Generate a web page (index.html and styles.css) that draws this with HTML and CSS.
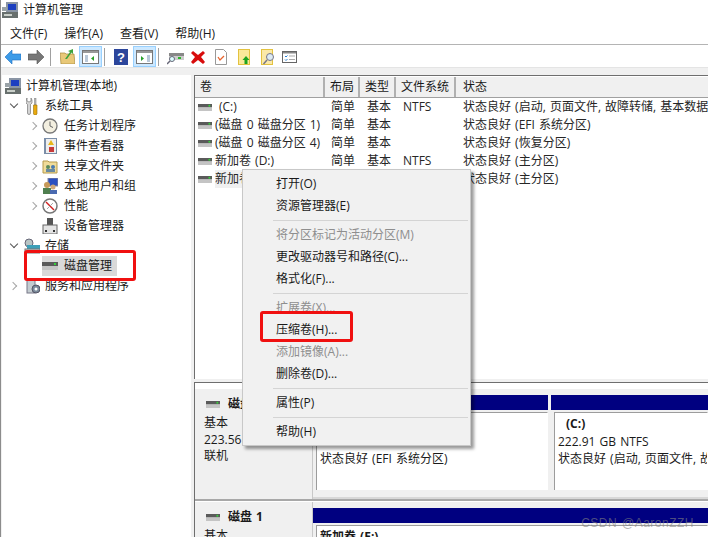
FILE: index.html
```html
<!DOCTYPE html>
<html lang="zh-CN">
<head>
    <meta charset="UTF-8">
    <title>计算机管理</title>
    <link rel="stylesheet" href="styles.css">
</head>
<body>
    <svg class="sprite" width="0" height="0">
        <symbol id="disk" viewBox="0 0 16 8">
            <rect x="0" y="0" width="16" height="4" fill="#5a5a5a"/>
            <rect x="0" y="4" width="16" height="4" fill="#c4c4c4"/>
            <rect x="12" y="1" width="2" height="2" fill="#35d03a"/>
        </symbol>
        <symbol id="pc" viewBox="0 0 16 16">
            <rect x="4" y="0" width="12" height="10" fill="#8a95a5"/>
            <rect x="6" y="2" width="8" height="6" fill="#1c3fc0"/>
            <rect x="0" y="5" width="5" height="4" fill="#9aa3a8"/>
            <rect x="0" y="10" width="16" height="6" fill="#68706e"/>
            <rect x="2" y="12" width="8" height="2" fill="#c9cfc9"/>
        </symbol>
    </svg>

    <div class="title-bar">
        <svg class="title-icon" width="16" height="16"><use href="#pc"/></svg>
        <span>计算机管理</span>
    </div>

    <div class="menu-bar">
        <span>文件(F)</span>
        <span>操作(A)</span>
        <span>查看(V)</span>
        <span>帮助(H)</span>
    </div>

    <div class="tool-bar">
        <svg class="tool tool-back" width="16" height="14" viewBox="0 0 16 14"><path d="M0 7 7 0v4h9v6H7v4z" fill="#3c9be8" stroke="#1f6fc0" stroke-width=".6"/></svg>
        <svg class="tool tool-fwd" width="16" height="14" viewBox="0 0 16 14"><path d="M16 7 9 0v4H0v6h9v4z" fill="#777" stroke="#555" stroke-width=".6"/></svg>
        <i class="tool-sep sep-a"></i>
        <svg class="tool tool-up" width="15" height="15" viewBox="0 0 15 15"><path d="M0 4h5l1 1h8l1 10H1z" fill="#e8c878" stroke="#a68a3c" stroke-width=".7"/><path d="M5 10 10 3 8 2l5-2v5l-1.500-1.500L7 10z" fill="#3da33d"/></svg>
        <div class="tool-on on-a">
            <svg width="17" height="14" viewBox="0 0 17 14"><rect x=".5" y=".5" width="16" height="13" fill="#fff" stroke="#777"/><rect x="1" y="1" width="15" height="2" fill="#999"/><rect x="3" y="5" width="3" height="7" fill="#b9c8d8"/><path d="M12 6v5L9 8.500z" fill="#2ba02b"/></svg>
        </div>
        <i class="tool-sep sep-b"></i>
        <svg class="tool tool-help" width="14" height="16" viewBox="0 0 14 16"><rect width="14" height="16" fill="#2c469c"/><text x="7" y="13" text-anchor="middle" fill="#fff" font-size="13" font-weight="700" font-family="Liberation Sans">?</text></svg>
        <div class="tool-on on-b">
            <svg width="17" height="14" viewBox="0 0 17 14"><rect x=".5" y=".5" width="16" height="13" fill="#fff" stroke="#777"/><rect x="1" y="1" width="15" height="2" fill="#999"/><rect x="11" y="5" width="3" height="7" fill="#b9c8d8"/><path d="M5 6v5l3-2.500z" fill="#2ba02b"/></svg>
        </div>
        <i class="tool-sep sep-c"></i>
        <svg class="tool tool-conn" width="17" height="14" viewBox="0 0 17 14"><rect x="2" y="2" width="15" height="3" fill="#888"/><rect x="2" y="5" width="15" height="4" fill="#ccc"/><rect x="11" y="6" width="3" height="2" fill="#2bb52b"/><circle cx="5" cy="8" r="2.500" fill="#dff" stroke="#667"/><path d="M3 10 0 13" stroke="#667" stroke-width="1.500"/></svg>
        <svg class="tool tool-x" width="14" height="14" viewBox="0 0 14 14"><path d="M2 1 7 5l5-4 2 2-4 4 4 5-2 2-5-4-5 4-2-2 4-5-4-4z" fill="#d80c0c"/></svg>
        <svg class="tool tool-check" width="12" height="16" viewBox="0 0 12 16"><path d="M.5.5h8l3 3v12H.5z" fill="#fff" stroke="#999"/><path d="M3 8l2 3 4-4" fill="none" stroke="#e8632c" stroke-width="1.300"/></svg>
        <svg class="tool tool-page-up" width="12" height="16" viewBox="0 0 12 16"><rect x=".5" y=".5" width="11" height="15" fill="#fbe99a" stroke="#e3c23f"/><path d="M8 7l3.500 4H9.500v4h-3v-4H4.500z" fill="#1fa41f"/></svg>
        <svg class="tool tool-page-find" width="14" height="16" viewBox="0 0 14 16"><rect x=".5" y=".5" width="11" height="15" fill="#fbe9a8" stroke="#e3c23f"/><circle cx="9" cy="8" r="3.500" fill="#dcebf5" stroke="#778"/><path d="M6 11l-3.500 4" stroke="#778" stroke-width="1.500"/></svg>
        <svg class="tool tool-list" width="15" height="12" viewBox="0 0 15 12"><rect x=".5" y=".5" width="14" height="11" fill="#fff" stroke="#666"/><rect x="1" y="1" width="13" height="1.500" fill="#888"/><path d="M3 5l1 1 1.500-1.500M3 8.500l1 1 1.500-1.500" fill="none" stroke="#2a7fd0"/><path d="M7 5h6M7 8.500h6" stroke="#aaa"/></svg>
    </div>

    <div class="workspace">
        <div class="tree">
            <div class="tree-row lvl-0"><svg class="tree-icon" width="16" height="16"><use href="#pc"/></svg>计算机管理(本地)</div>
            <div class="tree-row lvl-1"><span class="arrow open"></span>
                <svg class="tree-icon" width="12" height="17" viewBox="0 0 12 17"><path d="M1 0v3l2 1 2-1V0l1 2v3L4.500 6.500V15a1.500 1.500 0 0 1-3 0V6.500L0 5V2z" fill="#d4d4d4" stroke="#666" stroke-width=".6"/><path d="M8.500 0h1.500v7H8.500z" fill="#bbb" stroke="#777" stroke-width=".5"/><path d="M7.500 7h3.500v9l-1 1H8.500l-1-1z" fill="#e8a90f" stroke="#97700a" stroke-width=".6"/></svg>系统工具</div>
            <div class="tree-row lvl-2"><span class="arrow"></span>
                <svg class="tree-icon" width="16" height="16" viewBox="0 0 16 16"><circle cx="8" cy="8" r="7" fill="#f3efe0" stroke="#777" stroke-width="1.300"/><path d="M8 3.500V8l3 1.500" fill="none" stroke="#666"/></svg>任务计划程序</div>
            <div class="tree-row lvl-2"><span class="arrow"></span>
                <svg class="tree-icon" width="16" height="16" viewBox="0 0 16 16"><rect x="2" y="0" width="13" height="16" fill="#7b8ea8"/><rect x="4" y="1" width="10" height="14" fill="#eee"/><path d="M9 2l3 5H6z" fill="#e8b71a"/><rect x="7" y="9" width="5" height="5" fill="#c83a3a"/></svg>事件查看器</div>
            <div class="tree-row lvl-2"><span class="arrow"></span>
                <svg class="tree-icon" width="16" height="16" viewBox="0 0 16 16"><path d="M1 3h5l1 1h8v11H1z" fill="#f0dc9a" stroke="#b59a4c"/><circle cx="6" cy="9" r="2" fill="#5a8a5a"/><circle cx="11" cy="9" r="2" fill="#4a7ab0"/><rect x="4" y="11" width="9" height="3" fill="#6a8aa0"/></svg>共享文件夹</div>
            <div class="tree-row lvl-2"><span class="arrow"></span>
                <svg class="tree-icon" width="16" height="16" viewBox="0 0 16 16"><rect x="6" y="0" width="10" height="8" fill="#2a4fc0" stroke="#889"/><circle cx="5" cy="7" r="3" fill="#c79a5a"/><rect x="1" y="10" width="8" height="6" fill="#4f7f4f"/><circle cx="11" cy="9" r="2.500" fill="#d0a878"/><rect x="8" y="12" width="7" height="4" fill="#4a6ab0"/></svg>本地用户和组</div>
            <div class="tree-row lvl-2"><span class="arrow"></span>
                <svg class="tree-icon" width="16" height="16" viewBox="0 0 16 16"><circle cx="8" cy="8" r="7" fill="#fff" stroke="#777" stroke-width="1.500"/><path d="M4 4l8 8" stroke="#d02020" stroke-width="1.500"/><path d="M5 11l6-6" stroke="#aaa"/></svg>性能</div>
            <div class="tree-row lvl-2"><span class="arrow none"></span>
                <svg class="tree-icon" width="16" height="16" viewBox="0 0 16 16"><rect x="5" y="0" width="6" height="7" fill="#555"/><rect x="1" y="7" width="14" height="9" fill="#e4e4e4" stroke="#666"/><rect x="3" y="12" width="2" height="2" fill="#333"/><rect x="11" y="12" width="2" height="2" fill="#333"/></svg>设备管理器</div>
            <div class="tree-row lvl-1"><span class="arrow open"></span>
                <svg class="tree-icon wide" width="16" height="16" viewBox="0 0 16 16"><circle cx="5" cy="5" r="4" fill="#b8c4c4" stroke="#667"/><rect x="3" y="7" width="13" height="4" fill="#3c9fb8"/><rect x="1" y="11" width="15" height="4" fill="#ccc" stroke="#777"/></svg>存储</div>
            <div class="tree-row lvl-2 selected"><span class="arrow none"></span>
                <svg class="tree-icon" width="16" height="10"><use href="#disk"/></svg>磁盘管理</div>
            <div class="tree-row lvl-1"><span class="arrow"></span>
                <svg class="tree-icon svc" width="14" height="16" viewBox="0 0 14 16"><rect x="1" y="0" width="8" height="15" fill="#c4ccd0" stroke="#778"/><circle cx="10" cy="11" r="4" fill="#7a8a9a" stroke="#556"/><circle cx="10" cy="11" r="1.500" fill="#fff"/></svg>服务和应用程序</div>
        </div>

        <div class="main">
            <div class="list-pane">
                <div class="list-head">
                    <span class="col-vol">卷</span>
                    <span class="col-lay">布局</span>
                    <span class="col-typ">类型</span>
                    <span class="col-fs">文件系统</span>
                    <span class="col-st">状态</span>
                </div>
                <div class="list-row">
                    <span class="col-vol"><svg width="14" height="7"><use href="#disk"/></svg><b class="c-label">(C:)</b></span>
                    <span class="col-lay">简单</span><span class="col-typ">基本</span><span class="col-fs">NTFS</span>
                    <span class="col-st">状态良好 (启动, 页面文件, 故障转储, 基本数据分区)</span>
                </div>
                <div class="list-row">
                    <span class="col-vol"><svg width="14" height="7"><use href="#disk"/></svg>(磁盘 0 磁盘分区 1)</span>
                    <span class="col-lay">简单</span><span class="col-typ">基本</span><span class="col-fs"></span>
                    <span class="col-st">状态良好 (EFI 系统分区)</span>
                </div>
                <div class="list-row">
                    <span class="col-vol"><svg width="14" height="7"><use href="#disk"/></svg>(磁盘 0 磁盘分区 4)</span>
                    <span class="col-lay">简单</span><span class="col-typ">基本</span><span class="col-fs"></span>
                    <span class="col-st">状态良好 (恢复分区)</span>
                </div>
                <div class="list-row">
                    <span class="col-vol"><svg width="14" height="7"><use href="#disk"/></svg>新加卷 (D:)</span>
                    <span class="col-lay">简单</span><span class="col-typ">基本</span><span class="col-fs">NTFS</span>
                    <span class="col-st">状态良好 (主分区)</span>
                </div>
                <div class="list-row">
                    <span class="col-vol"><svg width="14" height="7"><use href="#disk"/></svg><span class="row-hi">新加卷 (E:)</span></span>
                    <span class="col-lay">简单</span><span class="col-typ">基本</span><span class="col-fs">NTFS</span>
                    <span class="col-st">状态良好 (主分区)</span>
                </div>
            </div>

            <div class="disk-pane">
                <div class="disk">
                    <div class="disk-info">
                        <div class="disk-name"><svg width="14" height="7"><use href="#disk"/></svg><b>磁盘 0</b></div>
                        <div>基本</div>
                        <div>223.56 GB</div>
                        <div>联机</div>
                    </div>
                    <div class="parts">
                        <div class="part part-efi">
                            <div class="part-bar"></div>
                            <div class="part-box">
                                <div>100 MB</div>
                                <div>状态良好 (EFI 系统分区)</div>
                            </div>
                        </div>
                        <div class="part part-c">
                            <div class="part-bar"></div>
                            <div class="part-box">
                                <b class="c-label">(C:)</b>
                                <div>222.91 GB NTFS</div>
                                <div class="nowrap">状态良好 (启动, 页面文件, 故障转储, 基本数据分区)</div>
                            </div>
                        </div>
                    </div>
                </div>
                <div class="disk">
                    <div class="disk-info">
                        <div class="disk-name"><svg width="14" height="7"><use href="#disk"/></svg><b>磁盘 1</b></div>
                        <div>基本</div>
                    </div>
                    <div class="parts">
                        <div class="part part-full">
                            <div class="part-bar"></div>
                            <div class="part-box"><b>新加卷 (E:)</b></div>
                        </div>
                    </div>
                </div>
            </div>
        </div>
    </div>

    <div class="context-menu">
        <div class="ctx-item">打开(O)</div>
        <div class="ctx-item">资源管理器(E)</div>
        <div class="ctx-sep"></div>
        <div class="ctx-item off">将分区标记为活动分区(M)</div>
        <div class="ctx-item">更改驱动器号和路径(C)...</div>
        <div class="ctx-item">格式化(F)...</div>
        <div class="ctx-sep"></div>
        <div class="ctx-item off">扩展卷(X)...</div>
        <div class="ctx-item">压缩卷(H)...</div>
        <div class="ctx-item off">添加镜像(A)...</div>
        <div class="ctx-item">删除卷(D)...</div>
        <div class="ctx-sep"></div>
        <div class="ctx-item">属性(P)</div>
        <div class="ctx-sep"></div>
        <div class="ctx-item">帮助(H)</div>
    </div>

    <div class="mark mark-tree"></div>
    <div class="mark mark-menu"></div>
    <div class="watermark">CSDN @AaronZZH</div>
</body>
</html>
```

FILE: styles.css
```css
html, body {
    margin: 0;
    height: 100%;
}

body {
    width: 708px;
    height: 537px;
    overflow: hidden;
    position: relative;
    background: #fff;
    color: #1a1a1a;
    font-family: "Open Sans", "Noto Sans CJK SC", sans-serif;
    font-size: 12px;
    line-height: 18px;
    word-spacing: 1px;
    border-left: 1px solid #8c8c8c;
    box-sizing: border-box;
}

.sprite {
    position: absolute;
}

svg {
    flex: none;
    display: block;
}

.title-bar {
    height: 22px;
    display: flex;
    align-items: center;
    gap: 5px;
    padding-left: 1px;
    padding-bottom: 3px;
    box-sizing: border-box;
}

.menu-bar {
    display: flex;
    gap: 17px;
    padding: 1px 0 0 9px;
    height: 21px;
    align-items: center;
    border-bottom: 1px solid #b4b4b4;
}

.tool-bar {
    height: 22px;
    position: relative;
    background: #fff;
}

.tool,
.tool-sep,
.tool-on {
    position: absolute;
}

.tool-back { left: 4px; top: 5px; }
.tool-fwd { left: 27px; top: 5px; }
.tool-up { left: 59px; top: 4px; }
.tool-help { left: 113px; top: 4px; }
.tool-conn { left: 166px; top: 6px; }
.tool-x { left: 190px; top: 5px; }
.tool-check { left: 214px; top: 4px; }
.tool-page-up { left: 237px; top: 4px; }
.tool-page-find { left: 260px; top: 4px; }
.tool-list { left: 281px; top: 6px; }

.tool-sep {
    top: 3px;
    width: 1px;
    height: 18px;
    background: #a0a0a0;
}

.sep-a { left: 49px; }
.sep-b { left: 103px; }
.sep-c { left: 157px; }

.tool-on {
    top: 1px;
    width: 23px;
    height: 21px;
    background: #cce8ff;
    border: 1px solid #99d1ff;
    box-sizing: border-box;
    display: flex;
    align-items: center;
    justify-content: center;
}

.on-a { left: 78px; }
.on-b { left: 132px; }

.workspace {
    height: 470px;
    background: #f0f0f0;
    padding-top: 7px;
    display: flex;
    gap: 3px;
    box-sizing: border-box;
    border-top: 1px solid #e4e4e4;
}

.tree {
    width: 189px;
    margin-left: 1px;
    background: #fff;
    padding-top: 1px;
    flex: none;
}

.tree-row {
    height: 20px;
    display: flex;
    align-items: center;
    white-space: nowrap;
}

.lvl-0 { padding-left: 3px; }
.lvl-0 .tree-icon { margin-right: 5px; }
.lvl-1 { padding-left: 7px; }
.lvl-1 .tree-icon { margin: 0 7px 0 7px; }
.lvl-1 .tree-icon.wide { margin: 0 5px 0 5px; }
.lvl-1 .tree-icon.svc { margin: 0 5px 0 7px; }
.lvl-2 { padding-left: 27px; }
.lvl-2 .tree-icon { margin: 0 6px 0 3px; }

.arrow {
    width: 10px;
    height: 10px;
    flex: none;
    position: relative;
}

.arrow::before {
    content: "";
    position: absolute;
    left: 1px;
    top: 2px;
    width: 5px;
    height: 5px;
    border-top: 1.500px solid #a6a6a6;
    border-right: 1.500px solid #a6a6a6;
    transform: rotate(45deg);
}

.arrow.open::before {
    left: 2px;
    top: 0;
    border-color: #555;
    transform: rotate(135deg);
}

.arrow.none::before {
    display: none;
}

.selected {
    background: linear-gradient(#d9d9d9, #d9d9d9) no-repeat 40px 0 / 75px 20px;
}

.main {
    flex: 1;
    min-width: 0;
    display: flex;
    flex-direction: column;
    gap: 3px;
}

.list-pane {
    height: 304px;
    background: #fff;
    border-left: 1px solid #6e6e6e;
    border-top: 1px solid #6e6e6e;
    box-sizing: border-box;
    padding-top: 1px;
    flex: none;
}

.list-head {
    display: flex;
    height: 20px;
    background: #f0f0f0;
    border-bottom: 1px solid #a0a0a0;
}

.list-head span {
    border-right: 2px solid #b0b0b0;
    padding-left: 5px;
    line-height: 20px;
}

.list-head .col-st {
    border-right: 0;
    padding-left: 7px;
}

.list-row {
    display: flex;
    height: 18px;
    white-space: nowrap;
    color: #262626;
}

.list-row span {
    padding-left: 6px;
}

.list-row .col-typ,
.list-row .col-fs,
.list-row .col-st {
    padding-left: 7px;
}

.list-row .col-vol {
    display: flex;
    align-items: center;
    gap: 3px;
    padding-left: 3px;
}

.list-row .col-vol span {
    padding-left: 0;
}

.col-vol { width: 130px; box-sizing: border-box; }
.col-lay { width: 35px; box-sizing: border-box; }
.col-typ { width: 36px; box-sizing: border-box; }
.col-fs { width: 60px; box-sizing: border-box; }
.col-st { flex: 1; min-width: 0; }

.row-hi {
    background: #f0f0f0;
}

.c-label {
    font-weight: 400;
    margin-left: 4px;
}

.disk-pane {
    flex: 1;
    min-height: 0;
    overflow: hidden;
    background: #fff;
    border-left: 1px solid #6e6e6e;
    border-top: 1px solid #6e6e6e;
    padding-top: 6px;
}

.disk {
    display: flex;
    height: 112px;
    background: #f0f0f0;
    border-bottom: 2px solid #a8a8a8;
    box-sizing: border-box;
    margin-bottom: 1px;
}

.disk-info {
    width: 118px;
    flex: none;
    box-sizing: border-box;
    padding: 6px 0 0 9px;
    line-height: 16.500px;
    border-right: 1px solid #c8c8c8;
}

.disk-name {
    display: flex;
    align-items: center;
    gap: 8px;
    height: 16px;
    margin: 1px 0 3px 2px;
}

.parts {
    flex: 1;
    min-width: 0;
    display: flex;
    gap: 3px;
    padding-top: 6px;
    padding-bottom: 7px;
    box-sizing: border-box;
    border-bottom: 2px solid #d8d8d8;
}

.part {
    display: flex;
    flex-direction: column;
    min-width: 0;
}

.part-efi { width: 235px; flex: none; }
.part-c { flex: 1; }
.part-full { flex: 1; }

.part-bar {
    height: 15px;
    background: #000080;
    flex: none;
}

.part-box {
    flex: 1;
    margin: 2px 0 0 3px;
    background: #fff;
    border: 1px solid #9c9c9c;
    border-right-color: #fff;
    border-bottom: 0;
    padding: 2px 0 0 3px;
    line-height: 17px;
    overflow: hidden;
    white-space: nowrap;
}

.part-efi .part-box {
    padding-top: 20px;
}

.part-c .c-label {
    font-weight: 700;
    display: block;
    margin-left: 8px;
    line-height: 18px;
}

.context-menu {
    position: absolute;
    left: 241px;
    top: 169px;
    width: 229px;
    height: 277px;
    box-sizing: border-box;
    background: #f1f1f1;
    border: 1px solid #c8c8c8;
    padding: 3px 2px;
    box-shadow: 3px 3px 3px rgba(0, 0, 0, .4);
}

.ctx-item {
    height: 22px;
    line-height: 22px;
    padding-left: 31px;
    white-space: nowrap;
}

.ctx-item.off {
    color: #8e8e8e;
}

.ctx-sep {
    height: 1px;
    margin: 3px 0 3px 28px;
    background: #d4d4d4;
}

.mark {
    position: absolute;
    border: 3px solid #f01010;
    border-radius: 3px;
    box-sizing: border-box;
}

.mark-tree {
    left: 23px;
    top: 250px;
    width: 112px;
    height: 31px;
}

.mark-menu {
    left: 259px;
    top: 311px;
    width: 93px;
    height: 31px;
}

.watermark {
    position: absolute;
    right: 14px;
    bottom: 6px;
    color: rgba(130, 130, 130, .6);
    font-size: 12px;
    line-height: 16px;
    font-family: "Liberation Sans", sans-serif;
    letter-spacing: .5px;
}
```
